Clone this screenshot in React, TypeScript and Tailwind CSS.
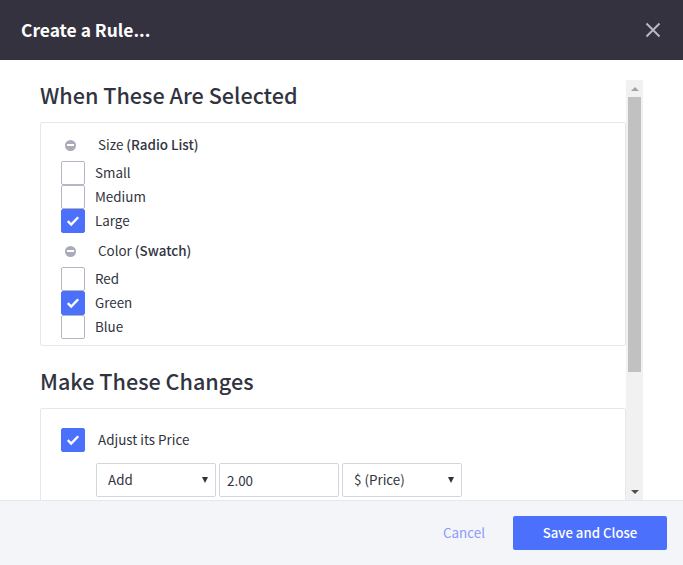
import React from "react";

const font = { fontFamily: '"Noto Sans CJK SC", "Noto Sans", sans-serif' };

function Check({ checked }: { checked?: boolean }) {
  return (
    <span
      className={
        "flex h-6 w-6 shrink-0 items-center justify-center rounded-[2px] border " +
        (checked ? "border-[#4b71fc] bg-[#4b71fc]" : "border-[#b4b6c4] bg-white")
      }
    >
      {checked && (
        <svg width="14" height="12" viewBox="0 0 14 12" fill="none">
          <path d="M1.8 6.2 5.2 9.6 12.2 2.2" stroke="#fff" strokeWidth="2.4" />
        </svg>
      )}
    </span>
  );
}

function Option({ label, checked }: { label: string; checked?: boolean }) {
  return (
    <div className="flex h-6 items-center">
      <Check checked={checked} />
      <span className="mb-[2px] ml-[10px] text-[13.4px] leading-[22px] text-[#313440]">{label}</span>
    </div>
  );
}

function GroupTitle({ name, kind }: { name: string; kind: string }) {
  return (
    <div className="flex h-[22px] items-center">
      <span className="ml-[4px] flex h-[11px] w-[11px] items-center justify-center rounded-full bg-[#a9abb8]">
        <span className="h-[2px] w-[7px] bg-white" />
      </span>
      <span className="mb-[2px] ml-[22px] text-[13.4px] leading-[21px] text-[#313440]">
        {name} <span className="font-medium">({kind})</span>
      </span>
    </div>
  );
}

function Arrow() {
  return <span className="absolute right-[7px] top-[13px] h-0 w-0 border-x-[3.5px] border-t-[6px] border-x-transparent border-t-[#34323f]" />;
}

function Select({ label }: { label: string }) {
  return (
    <div className="relative flex h-[34px] w-[120px] items-center rounded-[2px] border border-[#d5d6dc] bg-white pb-[2px] pl-[11px] text-[13.4px] leading-[22px] text-[#313440]">
      {label}
      <Arrow />
    </div>
  );
}

export default function App() {
  return (
    <div className="flex h-[565px] w-[683px] flex-col overflow-hidden bg-white" style={font}>
      <header className="flex h-[60px] shrink-0 items-center justify-between bg-[#34323f] pl-[21px] pr-[22px]">
        <h1 className="mb-[1px] text-[17.4px] font-semibold leading-6 text-white">Create a Rule...</h1>
        <svg width="16" height="16" viewBox="0 0 16 16" fill="none">
          <path d="M1.5 1.5 14.5 14.5M14.5 1.5 1.5 14.5" stroke="#b4b8c8" strokeWidth="2" />
        </svg>
      </header>

      <div className="flex h-[440px] shrink-0 pl-10 pr-10">
        <main className="h-[440px] w-[586px] shrink-0 overflow-hidden">
          <h2 className="mt-[20px] h-[42px] text-[21.6px] font-medium leading-[29px] text-[#313440]">When These Are Selected</h2>
          <section className="h-[224px] rounded-[2px] border border-[#e5e7ef] pl-5 pt-[11px]">
            <GroupTitle name="Size" kind="Radio List" />
            <div className="mt-[5px]">
              <Option label="Small" />
              <Option label="Medium" />
              <Option label="Large" checked />
            </div>
            <div className="mt-[7px]">
              <GroupTitle name="Color" kind="Swatch" />
            </div>
            <div className="mt-[5px]">
              <Option label="Red" />
              <Option label="Green" checked />
              <Option label="Blue" />
            </div>
          </section>
          <h2 className="mt-[20px] h-[42px] text-[21.6px] font-medium leading-[29px] text-[#313440]">Make These Changes</h2>
          <section className="h-[120px] rounded-[2px] border border-[#e5e7ef] pl-5 pt-[19px]">
            <div className="flex h-6 items-center">
              <Check checked />
              <span className="mb-[2px] ml-[13px] text-[13.4px] leading-[22px] text-[#313440]">Adjust its Price</span>
            </div>
            <div className="ml-[35px] mt-[11px] flex gap-[3px]">
              <Select label="Add" />
              <div className="flex h-[34px] w-[120px] items-center rounded-[2px] border border-[#d5d6dc] bg-white pl-[7px] text-[13.4px] leading-[22px] text-[#313440]">2.00</div>
              <Select label="$ (Price)" />
            </div>
          </section>
        </main>

        <div className="mt-[20px] flex h-[420px] w-[17px] shrink-0 flex-col items-center bg-[#f1f1f1]">
          <div className="flex h-[17px] items-center justify-center">
            <span className="h-0 w-0 border-x-[4px] border-b-[4px] border-x-transparent border-b-[#a3a3a3]" />
          </div>
          <div className="h-[275px] w-[13px] bg-[#c1c1c1]" />
          <div className="mt-auto flex h-[17px] items-center justify-center">
            <span className="h-0 w-0 border-x-[4px] border-t-[4px] border-x-transparent border-t-[#505050]" />
          </div>
        </div>
      </div>

      <footer className="flex h-[65px] shrink-0 items-center justify-end border-t border-[#e5e7ef] bg-[#f4f5f8] pr-4">
        <span className="mb-[2px] mr-7 text-[13.4px] leading-[22px] text-[#8a9bfd]">Cancel</span>
        <button className="h-[34px] w-[154px] rounded-[2px] bg-[#4b71fc] pb-[1px] text-[13.2px] font-medium leading-[23px] text-white">Save and Close</button>
      </footer>
    </div>
  );
}
